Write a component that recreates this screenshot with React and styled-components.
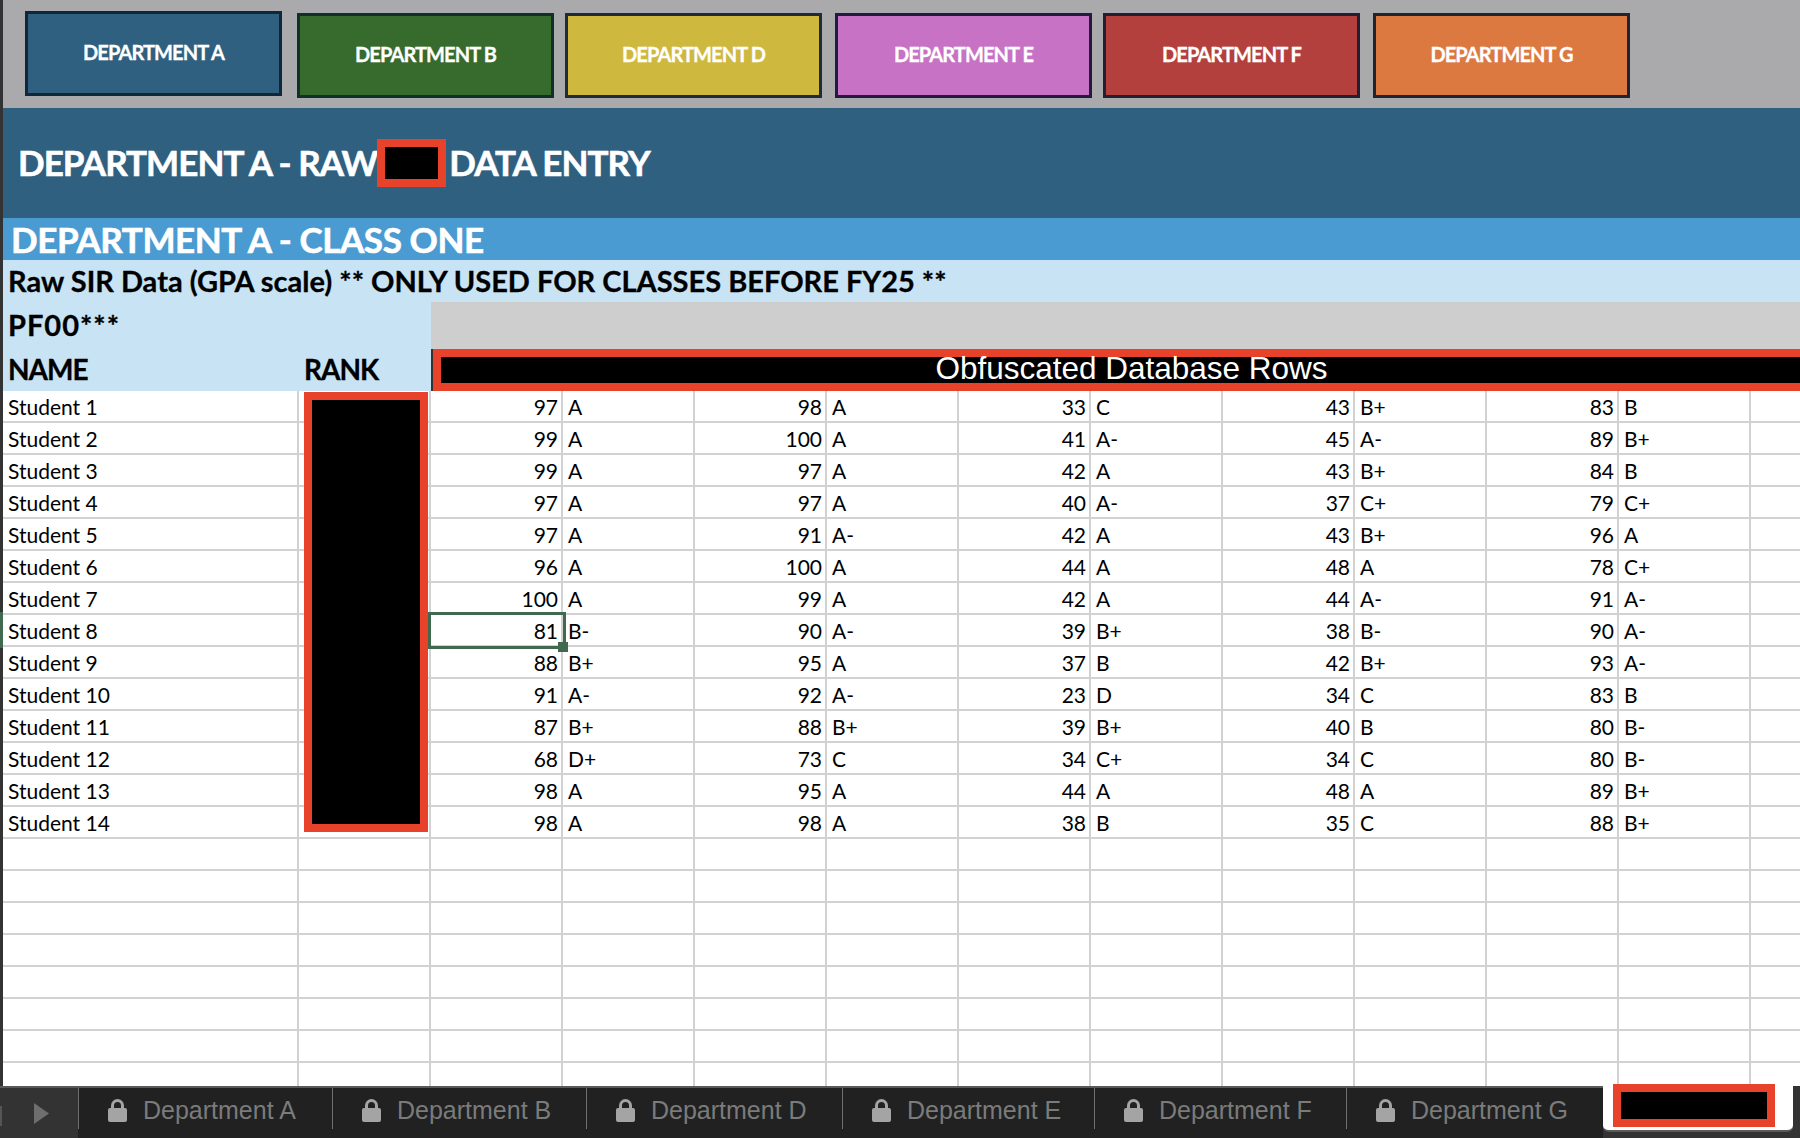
import React from 'react';
import styled, { createGlobalStyle } from 'styled-components';

const Global = createGlobalStyle`
  html, body { margin: 0; padding: 0; background: #fff; }
  * { box-sizing: border-box; }
`;

const RED = '#e8432a';
const GRID = '#d2d2d2';
const HEAD_FONT = `"Lato", "Liberation Sans", sans-serif`;
const CELL_FONT = `"Lato", "Open Sans", sans-serif`;

const Page = styled.div`
  width: 1800px; height: 1138px; display: flex; flex-direction: column; overflow: hidden;
  background: #fff;
`;
const Sheet = styled.div`
  flex: 1; min-height: 0; display: flex; flex-direction: column;
  background: #333; padding-left: 3px; overflow: hidden;
`;
const Toolbar = styled.div`
  height: 108px; flex: none; background: #aaaaac; display: flex; align-items: flex-start;
`;
const DeptButton = styled.div`
  width: 257px; height: 85px; margin-left: ${p => p.$gap}px; margin-top: ${p => p.$top}px;
  background: ${p => p.$bg}; border: 3px solid ${p => p.$edge}; padding-bottom: 3px;
  display: flex; align-items: center; justify-content: center;
  color: #fff; font: 700 20px ${HEAD_FONT}; letter-spacing: -0.9px; -webkit-text-stroke: 0.3px #fff;
`;
const TitleBar = styled.div`
  height: 110px; flex: none; background: #2f6080; color: #fff; display: flex; align-items: center;
  padding: 0 0 3px 15px; font: 700 35px ${HEAD_FONT}; letter-spacing: -0.95px; -webkit-text-stroke: 0.6px #fff;
`;
const TitleRedact = styled.span`
  width: 69px; height: 48px; margin: 3px 3px 0 0; background: #000; border: 8px solid ${RED}; flex: none;
`;
const ClassBar = styled.div`
  height: 42px; flex: none; background: #4a9bd1; color: #fff; display: flex; align-items: center;
  padding: 0 0 0 8px; font: 700 35px ${HEAD_FONT}; letter-spacing: -0.4px; -webkit-text-stroke: 0.6px #fff;
`;
const RawBar = styled.div`
  height: 42px; flex: none; background: #c7e3f4; color: #000; display: flex; align-items: center;
  padding: 0 0 2px 5px; font: 700 29px ${HEAD_FONT}; -webkit-text-stroke: 0.3px #000;
`;
const InfoRow = styled.div`
  height: 47px; flex: none; display: flex;
`;
const NameRow = styled.div`
  height: 42px; flex: none; display: flex;
`;
const LabelBlock = styled.div`
  width: 428px; background: #c7e3f4; display: flex; align-items: center; flex: none;
  padding-bottom: ${p => p.$lift}px; letter-spacing: ${p => p.$track}px;
  font: 700 ${p => p.$size}px ${HEAD_FONT}; color: #000; -webkit-text-stroke: 0.3px #000;
`;
const LabelName = styled.span`
  width: 301px; padding-left: 5px; flex: none;
`;
const GrayFill = styled.div`
  flex: 1; background: #cecece;
`;
const ObfuscatedBar = styled.div`
  flex: 1; margin-left: 2px; background: #000; border: 8px solid ${RED}; border-right: 0;
  display: flex; align-items: center; justify-content: center;
  color: #fff; font: 400 31.5px "Liberation Sans", sans-serif; padding: 0 0 2px 22px; line-height: 1;
`;
const Grid = styled.div`
  flex: 1; min-height: 0; position: relative; background: #fff;
`;
const Row = styled.div`
  height: 32px; display: flex; position: relative;
  ${p => p.$active && `
    &::before { content: ''; position: absolute; left: -3px; top: -3px; width: 3px; height: 36px; background: #41694f; }
  `}
`;
const Cell = styled.div`
  width: ${p => p.$w}px; flex: none; height: 32px; position: relative;
  border-right: 2px solid ${GRID}; border-bottom: 2px solid ${GRID};
  font: 400 21px/32px ${CELL_FONT}; color: #000; white-space: nowrap;
  text-align: ${p => p.$num ? 'right' : 'left'};
  padding: ${p => p.$num ? '0 3px 0 0' : '0 0 0 5px'};
  ${p => p.$selected && `
    z-index: 2;
    &::before { content: ''; box-sizing: border-box; position: absolute; left: -3px; top: -3px; width: 138px; height: 37px; border: 3px solid #41694f; }
    &::after { content: ''; position: absolute; right: -7px; bottom: -7px; width: 10px; height: 10px; background: #41694f; }
  `}
`;
const RankRedact = styled.div`
  position: absolute; left: 301px; top: 1px; width: 124px; height: 440px; background: #000; border: 8px solid ${RED};
`;
const TabBar = styled.div`
  height: 52px; flex: none; background: #212121; border-top: 2px solid #5a5a5a; display: flex;
`;
const ScrollZone = styled.div`
  width: 78px; flex: none; background: #333; display: flex; align-items: center; height: 50px;
  padding-left: 34px; position: relative;
  &::before { content: ''; position: absolute; left: 0; top: 18px; width: 2px; height: 20px; background: #555; }
`;
const Tab = styled.div`
  width: ${p => p.$w}px; flex: none; height: 41px; border-left: 1px solid #6f6f6f;
  display: flex; align-items: center; gap: 16px; padding: 3px 0 0 29px;
  color: #7b7b7b; font: 400 25px "Liberation Sans", sans-serif;
`;
const ActiveArea = styled.div`
  flex: 1; margin-top: -2px; margin-left: 1px; background: #333; display: flex; align-items: flex-start;
`;
const ActiveTab = styled.div`
  width: 190px; flex: none; height: 46px; background: #fff; border-radius: 0 0 6px 6px;
  border-bottom: 2px solid #5a5a5a; position: relative;
`;
const TabRedact = styled.div`
  position: absolute; left: 10px; top: -2px; width: 162px; height: 43px; background: #000; border: 8px solid ${RED};
`;

const Lock = () => (
  <svg width="19" height="23" viewBox="0 0 19 23" fill="none">
    <path d="M4.5 10V6.5a5 5 0 0 1 10 0V10" stroke="#a4a4a4" strokeWidth="3" />
    <rect x="0" y="9" width="19" height="14" rx="2" fill="#a4a4a4" />
  </svg>
);
const Play = () => (
  <svg width="15" height="21" viewBox="0 0 15 21"><path d="M0 0L15 10.5L0 21Z" fill="#6e6e6e" /></svg>
);

const depts = [
  { name: 'DEPARTMENT A', bg: '#2f6080', edge: '#12263a', gap: 22, top: 11 },
  { name: 'DEPARTMENT B', bg: '#376a2d', edge: '#12302a', gap: 15, top: 13 },
  { name: 'DEPARTMENT D', bg: '#cfb83e', edge: '#1f2c38', gap: 11, top: 13 },
  { name: 'DEPARTMENT E', bg: '#c772c5', edge: '#241a40', gap: 13, top: 13 },
  { name: 'DEPARTMENT F', bg: '#b4403e', edge: '#221f30', gap: 11, top: 13 },
  { name: 'DEPARTMENT G', bg: '#db7941', edge: '#1f2430', gap: 13, top: 13 },
];

const rows = [
  ['Student 1', 97,'A',98,'A',33,'C',43,'B+',83,'B'],
  ['Student 2', 99,'A',100,'A',41,'A-',45,'A-',89,'B+'],
  ['Student 3', 99,'A',97,'A',42,'A',43,'B+',84,'B'],
  ['Student 4', 97,'A',97,'A',40,'A-',37,'C+',79,'C+'],
  ['Student 5', 97,'A',91,'A-',42,'A',43,'B+',96,'A'],
  ['Student 6', 96,'A',100,'A',44,'A',48,'A',78,'C+'],
  ['Student 7', 100,'A',99,'A',42,'A',44,'A-',91,'A-'],
  ['Student 8', 81,'B-',90,'A-',39,'B+',38,'B-',90,'A-'],
  ['Student 9', 88,'B+',95,'A',37,'B',42,'B+',93,'A-'],
  ['Student 10', 91,'A-',92,'A-',23,'D',34,'C',83,'B'],
  ['Student 11', 87,'B+',88,'B+',39,'B+',40,'B',80,'B-'],
  ['Student 12', 68,'D+',73,'C',34,'C+',34,'C',80,'B-'],
  ['Student 13', 98,'A',95,'A',44,'A',48,'A',89,'B+'],
  ['Student 14', 98,'A',98,'A',38,'B',35,'C',88,'B+'],
];
const blanks = Array.from({ length: 8 }, () => ['', '', '', '', '', '', '', '', '', '', '']);
const tabs = [
  ['Department A', 254], ['Department B', 254], ['Department D', 256],
  ['Department E', 252], ['Department F', 252], ['Department G', 256],
];

export default function App() {
  return (
    <Page>
      <Global />
      <Sheet>
        <Toolbar>
          {depts.map(d => (
            <DeptButton key={d.name} $bg={d.bg} $edge={d.edge} $gap={d.gap} $top={d.top}>{d.name}</DeptButton>
          ))}
        </Toolbar>
        <TitleBar>DEPARTMENT A - RAW<TitleRedact />DATA ENTRY</TitleBar>
        <ClassBar>DEPARTMENT A - CLASS ONE</ClassBar>
        <RawBar>Raw SIR Data (GPA scale) ** ONLY USED FOR CLASSES BEFORE FY25 **</RawBar>
        <InfoRow>
          <LabelBlock $size={29} $lift={3} $track={1}><LabelName>PF00***</LabelName></LabelBlock>
          <GrayFill />
        </InfoRow>
        <NameRow>
          <LabelBlock $size={28} $lift={2} $track={-1}><LabelName>NAME</LabelName><span>RANK</span></LabelBlock>
          <ObfuscatedBar>Obfuscated Database Rows</ObfuscatedBar>
        </NameRow>
        <Grid>
          {[...rows, ...blanks].map((r, i) => (
            <Row key={i} $active={i === 7}>
              <Cell $w={296}>{r[0]}</Cell>
              <Cell $w={132} />
              {r.slice(1).map((v, j) => (
                <Cell key={j} $w={132} $num={j % 2 === 0} $selected={i === 7 && j === 0}>{v}</Cell>
              ))}
              <Cell $w={132} />
            </Row>
          ))}
          <RankRedact />
        </Grid>
      </Sheet>
      <TabBar>
        <ScrollZone><Play /></ScrollZone>
        {tabs.map(([t, w]) => (
          <Tab key={t} $w={w}><Lock />{t}</Tab>
        ))}
        <ActiveArea><ActiveTab><TabRedact /></ActiveTab></ActiveArea>
      </TabBar>
    </Page>
  );
}
